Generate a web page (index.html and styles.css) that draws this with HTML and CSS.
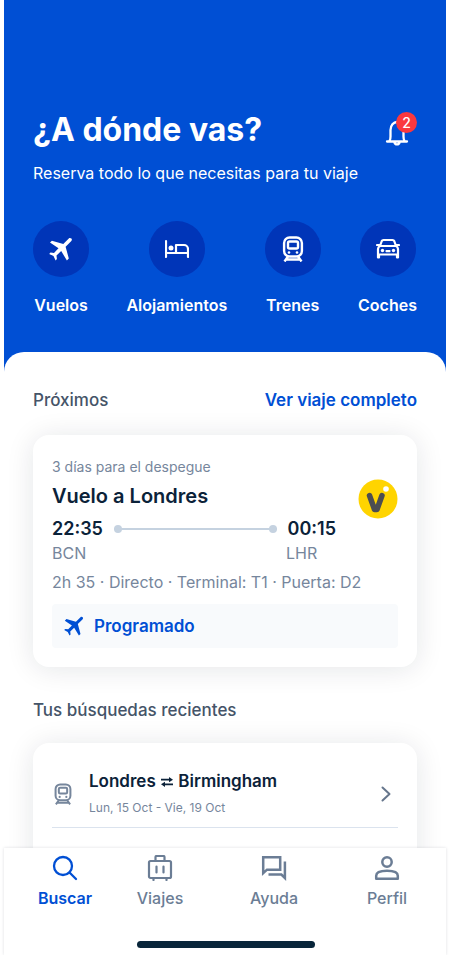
FILE: index.html
```html
<!DOCTYPE html>
<html lang="es">
<head>
<meta charset="utf-8">
<meta name="viewport" content="width=device-width, initial-scale=1">
<title>¿A dónde vas?</title>
<link rel="stylesheet" href="styles.css">
</head>
<body>
<svg class="sprite" aria-hidden="true">
  <symbol id="plane" viewBox="0 0 24 24">
    <path d="M22.400 1.600c.8.800.5 1.800-.3 2.600l-5.500 5.500 3.200 11.800-1.900 1.900-5.700-9.300-4.700 4.500.4 3.500-1.300 1.300-2.100-4.300-4.300-2.200 1.300-1.300 3.500.4 4.500-4.700L1 5.600l1.900-1.900 11.400 3.200 5.500-5.500c.8-.8 1.900-.5 2.600.2z"/>
  </symbol>
  <symbol id="train" viewBox="0 0 24 26">
    <g fill="none" stroke="currentColor" stroke-width="2.400" stroke-linejoin="round">
      <rect x="3.100" y="1.500" width="17.800" height="19" rx="5.500"/>
      <rect x="7" y="5.500" width="10" height="7" rx="1.500"/>
      <path d="M7 20.500 3.500 25.500M17 20.500l3.500 5M5 23.500h14"/>
    </g>
    <circle cx="8" cy="16.500" r="1.300"/><circle cx="16" cy="16.500" r="1.300"/>
  </symbol>
</svg>
<div class="app">
  <main class="content">
    <header class="hero">
      <div class="hero-top">
        <h1>¿A dónde vas?</h1>
        <button class="bell" type="button" aria-label="Notificaciones">
          <svg class="outline" viewBox="0 0 24 26" width="24" height="26" stroke-width="2.300"><path d="M2 21.500h20M4.500 21c1-1.500 1-3 1-4.500V10C5.500 5.500 8.500 2 12 2s6.500 3.500 6.500 8v6.500c0 1.500 0 3 1 4.500M9.500 22.500c.5 2.500 4.500 2.500 5 0"/></svg>
          <span class="badge">2</span>
        </button>
      </div>
      <p class="subtitle">Reserva todo lo que necesitas para tu viaje</p>
      <nav class="services">
        <a href="#vuelos"><span class="disc"><svg width="24" height="24"><use href="#plane"/></svg></span>Vuelos</a>
        <a href="#alojamientos"><span class="disc"><svg viewBox="0 0 24 24" width="24" height="24"><path d="M1 4v16M1 16h22M23 20v-8a4 4 0 0 0-4-4h-8v8" fill="none" stroke="currentColor" stroke-width="2.200" stroke-linecap="round" stroke-linejoin="round"/><circle cx="6" cy="11" r="2.500"/></svg></span>Alojamientos</a>
        <a href="#trenes"><span class="disc"><svg width="24" height="26"><use href="#train"/></svg></span>Trenes</a>
        <a href="#coches"><span class="disc"><svg viewBox="0 0 24 24" width="24" height="24"><path d="M2 20.500V12q0-2 2-3h16q2 1 2 3v8.500M2 17.500h20M4 9l1.800-5Q6.200 3 7.500 3h9q1.300 0 1.700 1L20 9M1 8h2.500M20.500 8H23M3 18v2.500M21 18v2.500" fill="none" stroke="currentColor" stroke-width="2.200" stroke-linecap="round" stroke-linejoin="round"/><circle cx="6.500" cy="13.500" r="1.700"/><circle cx="17.500" cy="13.500" r="1.700"/><rect x="9.500" y="13" width="5" height="2.200" rx=".8"/></svg></span>Coches</a>
      </nav>
    </header>
    <div class="sheet">
      <section>
        <div class="section-head">
          <h2>Próximos</h2>
          <a href="#viaje">Ver viaje completo</a>
        </div>
        <article class="card trip">
          <div class="trip-main">
            <div class="trip-info">
              <p class="countdown">3 días para el despegue</p>
              <h3>Vuelo a Londres</h3>
              <div class="times"><time>22:35</time><span class="route"></span><time>00:15</time></div>
            </div>
            <svg class="airline" viewBox="0 0 40 40" role="img" aria-label="Aerolínea">
              <circle cx="20" cy="20" r="19.500" fill="#ffd400"/>
              <path d="M11.500 16.500 16.500 30.500h2.500L24 16.500" fill="none" stroke="#4c4d52" stroke-width="5.500" stroke-linecap="round" stroke-linejoin="round"/>
              <circle cx="28" cy="10" r="2.800" fill="#fff"/>
            </svg>
          </div>
          <div class="airports"><span>BCN</span><span>LHR</span></div>
          <p class="details">2h 35 · Directo · Terminal: T1 · Puerta: D2</p>
          <div class="status"><svg width="20" height="20"><use href="#plane"/></svg>Programado</div>
        </article>
      </section>
      <section>
        <div class="section-head"><h2>Tus búsquedas recientes</h2></div>
        <div class="card searches">
          <a class="search" href="#londres-birmingham">
            <svg class="search-icon" width="20" height="22"><use href="#train"/></svg>
            <span class="search-text">
              <span class="search-title">Londres <svg class="swap" viewBox="0 0 12 10" width="12" height="10"><path d="M0 1.700h8V0l4 2.700-4 2.600V3.500H0zM12 8.300H4V10L0 7.300l4-2.600v1.800h8z"/></svg> Birmingham</span>
              <span class="search-dates">Lun, 15 Oct - Vie, 19 Oct</span>
            </span>
            <svg class="chevron" viewBox="0 0 10 16" width="10" height="16"><path d="m1.500 1.500 7 6.500-7 6.500" fill="none" stroke="currentColor" stroke-width="2" stroke-linecap="round" stroke-linejoin="round"/></svg>
          </a>
        </div>
      </section>
    </div>
  </main>
  <footer class="dock">
    <nav class="tabs">
      <a class="active" href="#buscar" aria-current="page"><svg class="outline" viewBox="0 0 26 26" stroke-width="2.300"><circle cx="11" cy="11" r="9"/><path d="m17.500 17.500 6.500 6.500"/></svg>Buscar</a>
      <a href="#viajes"><svg class="outline" viewBox="0 0 26 26" stroke-width="2.200"><rect x="2" y="6" width="22" height="17" rx="1.500"/><path d="M8.500 6V2Q8.500 1 9.500 1h7q1 0 1 1v4M9.500 11.500v6M16.500 11.500v6M6.500 23v2M19.500 23v2"/></svg>Viajes</a>
      <a href="#ayuda"><svg class="outline sharp" viewBox="0 0 26 26" stroke-width="2.500"><path d="M2.200 2.200h17v12.500H6l-3.800 3.500z"/><path d="M23.900 6.500v16.500l-3.500-3.500H7.500"/></svg>Ayuda</a>
      <a href="#perfil"><svg class="outline" viewBox="0 0 26 26" stroke-width="2.500"><circle cx="13" cy="7" r="4.700"/><path d="M2.200 23.800v-3c0-3.500 5-5 10.800-5s10.800 1.500 10.800 5v3z"/></svg>Perfil</a>
    </nav>
    <div class="home-bar"></div>
  </footer>
</div>
</body>
</html>
```
FILE: styles.css
```css
* { box-sizing: border-box; }
body {
  margin: 0;
  background: #fff;
  color: #0b2239;
  font-family: Inter, "Liberation Sans", sans-serif;
  font-size: 16px;
  line-height: 24px;
}
h1, h2, h3, p { margin: 0; }
a { color: inherit; text-decoration: none; }
svg { fill: currentColor; }
.outline {
  fill: none;
  stroke: currentColor;
  stroke-linecap: round;
  stroke-linejoin: round;
}
.sharp { stroke-linecap: butt; stroke-linejoin: miter; }
.sprite { position: absolute; width: 0; height: 0; }

.app {
  display: flex;
  flex-direction: column;
  height: 100vh;
  padding: 0 4px;
}
.content { flex: 1; min-height: 0; overflow: hidden; }

.hero {
  padding: 110px 29px 55px;
  background: #004fd4;
  color: #fff;
}
.hero-top { display: flex; justify-content: space-between; }
h1 { font-size: 32px; font-weight: 700; line-height: 40px; }
.bell {
  position: relative;
  width: 32px;
  height: 40px;
  padding: 8px 0 0;
  border: 0;
  background: none;
  color: inherit;
  text-align: left;
}
.badge {
  position: absolute;
  top: 2px;
  right: 0;
  width: 21px;
  height: 21px;
  border-radius: 50%;
  background: #fa383e;
  font: 500 14px/21px Inter, sans-serif;
  text-align: center;
}
.subtitle { margin-top: 11px; }
.services { display: flex; justify-content: space-between; margin-top: 36px; }
.services a {
  display: flex;
  flex-direction: column;
  align-items: center;
  gap: 16px;
  font-weight: 600;
}
.disc {
  display: flex;
  align-items: center;
  justify-content: center;
  width: 56px;
  height: 56px;
  border-radius: 50%;
  background: #0035b8;
}

.sheet {
  display: flex;
  flex-direction: column;
  gap: 31px;
  margin-top: -20px;
  padding: 36px 29px 24px;
  border-radius: 20px 20px 0 0;
  background: #fff;
}
.section-head { display: flex; justify-content: space-between; font-size: 17px; }
h2 { color: #455468; font-size: 17px; font-weight: 500; }
.section-head a { color: #004fd4; font-weight: 600; }
.card {
  margin-top: 23px;
  padding: 22px 19px 19px;
  border-radius: 16px;
  background: #fff;
  box-shadow: 0 2px 28px rgba(20, 30, 50, .11);
}
.trip-main { display: flex; align-items: center; gap: 22px; }
.trip-info { flex: 1; }
.airline { width: 40px; height: 40px; }
.countdown { color: #76869c; font-size: 14px; line-height: 20px; }
h3 { margin-top: 5px; font-size: 20px; font-weight: 600; line-height: 28px; }
.times { display: flex; align-items: center; gap: 11px; margin-top: 7px; }
.times time { font-size: 18px; font-weight: 600; }
.route {
  position: relative;
  flex: 1;
  height: 2px;
  background: #c5d2e0;
}
.route::before, .route::after {
  content: "";
  position: absolute;
  top: -3px;
  width: 8px;
  height: 8px;
  border-radius: 50%;
  background: #c5d2e0;
}
.route::before { left: 0; }
.route::after { right: 0; }
.airports {
  display: grid;
  grid-template-columns: 1fr 112px;
  color: #76869c;
}
.details { margin-top: 5px; color: #76869c; }
.status {
  display: flex;
  align-items: center;
  gap: 10px;
  margin-top: 10px;
  padding: 10px 12px;
  border-radius: 4px;
  background: #f8fafc;
  color: #004fd4;
  font-size: 17px;
  font-weight: 600;
}

.searches { margin-top: 21px; padding-top: 26px; padding-bottom: 64px; }
.search {
  display: flex;
  align-items: center;
  padding: 0 7px 9px 1px;
  border-bottom: 1px solid #dbe3ee;
}
.search-icon { margin-right: 16px; color: #76869c; }
.search-text { flex: 1; }
.search-title, .search-dates { display: block; }
.search-title { font-size: 17px; font-weight: 600; }
.swap { margin: 0 1px; }
.search-dates { margin-top: 5px; color: #76869c; font-size: 12px; line-height: 20px; }
.chevron { color: #66768c; }

.dock {
  position: relative;
  padding: 7px 12px 7px 14px;
  background: #fff;
  box-shadow: 0 0 3px rgba(20, 30, 50, .14);
}
.tabs { display: grid; grid-template-columns: 94fr 96fr 132fr 94fr; }
.tabs a {
  display: flex;
  flex-direction: column;
  align-items: center;
  gap: 5px;
  color: #6b7d95;
  font-weight: 500;
}
.tabs svg { width: 26px; height: 26px; }
.tabs .active { color: #004fd4; font-weight: 600; }
.home-bar {
  width: 178px;
  height: 7px;
  margin: 31px auto 0;
  border-radius: 4px;
  background: #08253a;
}
```
